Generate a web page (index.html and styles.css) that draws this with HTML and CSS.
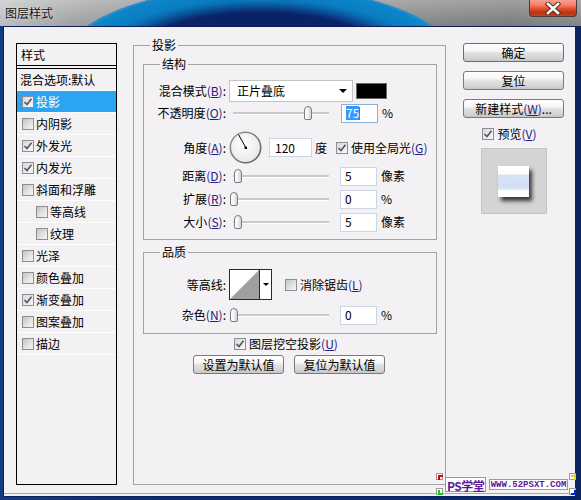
FILE: index.html
```html
<!DOCTYPE html>
<html lang="zh-CN">
<head>
<meta charset="utf-8">
<title>图层样式</title>
<link rel="stylesheet" href="styles.css">
</head>
<body>
<div class="win">
  <div class="titlebar">
    <span class="title">图层样式</span>
    <div class="close">
      <svg width="20" height="13" viewBox="0 0 20 13"><path d="M5 2 L15 11 M15 2 L5 11" stroke="#5a2a20" stroke-width="4.5" stroke-linecap="square"/><path d="M5 2 L15 11 M15 2 L5 11" stroke="#fff" stroke-width="2.6" stroke-linecap="square"/></svg>
    </div>
  </div>
  <div class="frame">
    <div class="content">
      <div class="stylelist">
        <div class="list-head">样式</div>
        <div class="li blend">混合选项:默认</div>
        <div class="li sel"><span class="cb on"><svg width="10" height="10" viewBox="0 0 10 10"><path d="M1.5 5 L4 7.5 L8.5 1.8" fill="none" stroke="#4c5866" stroke-width="1.6"/></svg></span>投影</div>
        <div class="li"><span class="cb"></span>内阴影</div>
        <div class="li"><span class="cb on"><svg width="10" height="10" viewBox="0 0 10 10"><path d="M1.5 5 L4 7.5 L8.5 1.8" fill="none" stroke="#4c5866" stroke-width="1.6"/></svg></span>外发光</div>
        <div class="li"><span class="cb on"><svg width="10" height="10" viewBox="0 0 10 10"><path d="M1.5 5 L4 7.5 L8.5 1.8" fill="none" stroke="#4c5866" stroke-width="1.6"/></svg></span>内发光</div>
        <div class="li"><span class="cb"></span>斜面和浮雕</div>
        <div class="li sub"><span class="cb"></span>等高线</div>
        <div class="li sub"><span class="cb"></span>纹理</div>
        <div class="li"><span class="cb"></span>光泽</div>
        <div class="li"><span class="cb"></span>颜色叠加</div>
        <div class="li"><span class="cb on"><svg width="10" height="10" viewBox="0 0 10 10"><path d="M1.5 5 L4 7.5 L8.5 1.8" fill="none" stroke="#4c5866" stroke-width="1.6"/></svg></span>渐变叠加</div>
        <div class="li"><span class="cb"></span>图案叠加</div>
        <div class="li"><span class="cb"></span>描边</div>
      </div>

      <div class="grp grp-outer">
        <span class="legend">投影</span>
        <div class="grp grp-struct">
          <span class="legend">结构</span>
          <div class="row r-blend">
            <span class="lbl">混合模式<span class="mn">(<u>B</u>)</span>:</span>
            <div class="dd">正片叠底<span class="dd-arrow"></span></div>
            <div class="swatch"></div>
          </div>
          <div class="row r-op">
            <span class="lbl">不透明度<span class="mn">(<u>O</u>)</span>:</span>
            <div class="slider"><span class="thumb" style="left:75px"></span></div>
            <div class="inp focus"><span class="selected">75</span><span class="caret"></span></div>
            <span class="unit">%</span>
          </div>
          <div class="row r-angle">
            <span class="lbl">角度<span class="mn">(<u>A</u>)</span>:</span>
            <svg class="dial" width="33" height="33" viewBox="0 0 33 33">
              <defs>
                <radialGradient id="dg" cx="45%" cy="40%" r="65%"><stop offset="0" stop-color="#ffffff"/><stop offset="1" stop-color="#e6e6e6"/></radialGradient>
                <linearGradient id="rg" x1="0" y1="0" x2="1" y2="1"><stop offset="0" stop-color="#9a9a9a"/><stop offset="1" stop-color="#5e5e5e"/></linearGradient>
              </defs>
              <circle cx="16.5" cy="16.5" r="15.2" fill="url(#dg)" stroke="url(#rg)" stroke-width="1.6"/>
              <line x1="17" y1="17" x2="9.5" y2="3.5" stroke="#000" stroke-width="1"/>
              <rect x="15.6" y="15.6" width="2.4" height="2.4" fill="#000"/>
            </svg>
            <div class="inp wide">120</div>
            <span class="unit u-deg">度</span>
            <span class="cb on gl"><svg width="10" height="10" viewBox="0 0 10 10"><path d="M1.5 5 L4 7.5 L8.5 1.8" fill="none" stroke="#4c5866" stroke-width="1.6"/></svg></span>
            <span class="cbt">使用全局光<span class="mn">(<u>G</u>)</span></span>
          </div>
          <div class="row r-dist">
            <span class="lbl">距离<span class="mn">(<u>D</u>)</span>:</span>
            <div class="slider"><span class="thumb" style="left:5px"></span></div>
            <div class="inp">5</div>
            <span class="unit">像素</span>
          </div>
          <div class="row r-sp">
            <span class="lbl">扩展<span class="mn">(<u>R</u>)</span>:</span>
            <div class="slider"><span class="thumb" style="left:1px"></span></div>
            <div class="inp">0</div>
            <span class="unit">%</span>
          </div>
          <div class="row r-sz">
            <span class="lbl">大小<span class="mn">(<u>S</u>)</span>:</span>
            <div class="slider"><span class="thumb" style="left:5px"></span></div>
            <div class="inp">5</div>
            <span class="unit">像素</span>
          </div>
        </div>

        <div class="grp grp-qual">
          <span class="legend">品质</span>
          <div class="row r-contour">
            <span class="lbl">等高线:</span>
            <div class="contour">
              <svg class="ct-img" width="29" height="29" viewBox="0 0 29 29"><polygon points="0,29 29,0 29,29" fill="#a19fa1"/></svg>
              <div class="ct-arrow"><span class="dd-arrow small"></span></div>
            </div>
            <span class="cb aa"></span>
            <span class="cbt">消除锯齿<span class="mn">(<u>L</u>)</span></span>
          </div>
          <div class="row r-noise">
            <span class="lbl">杂色<span class="mn">(<u>N</u>)</span>:</span>
            <div class="slider"><span class="thumb" style="left:1px"></span></div>
            <div class="inp">0</div>
            <span class="unit">%</span>
          </div>
        </div>

        <div class="knock">
          <span class="cb on"><svg width="10" height="10" viewBox="0 0 10 10"><path d="M1.5 5 L4 7.5 L8.5 1.8" fill="none" stroke="#4c5866" stroke-width="1.6"/></svg></span>
          <span class="cbt">图层挖空投影<span class="mn">(<u>U</u>)</span></span>
        </div>
        <div class="btnrow">
          <div class="btn">设置为默认值</div>
          <div class="btn">复位为默认值</div>
        </div>
      </div>

      <div class="side">
        <div class="btn ok">确定</div>
        <div class="btn">复位</div>
        <div class="btn">新建样式<span class="mn">(<u>W</u>)</span>...</div>
        <div class="prev-row">
          <span class="cb on"><svg width="10" height="10" viewBox="0 0 10 10"><path d="M1.5 5 L4 7.5 L8.5 1.8" fill="none" stroke="#4c5866" stroke-width="1.6"/></svg></span>
          <span class="cbt">预览<span class="mn">(<u>V</u>)</span></span>
        </div>
        <div class="preview"><div class="pv-sq"></div></div>
      </div>
    </div>
  </div>

  <div class="wm">
    <span class="mk mk-r"></span>
    <span class="mk mk-g"></span>
    <span class="mk mk-y"></span>
    <span class="mk mk-b"></span>
    <span class="wm-ps">PS学堂</span>
    <span class="wm-url">WWW.52PSXT.COM</span>
  </div>
</div>
</body>
</html>
```

FILE: styles.css
```css
* { box-sizing: border-box; margin: 0; padding: 0; }
html, body { width: 581px; height: 500px; overflow: hidden; }
body {
  font-family: "Noto Sans CJK SC", "Liberation Sans", sans-serif;
  font-size: 12px;
  line-height: 1;
  color: #000;
  background: #0c2a6c;
}
.win { position: relative; width: 581px; height: 500px; display: flex; flex-direction: column; }

/* title bar */
.titlebar {
  height: 26px; flex: none; display: flex; align-items: flex-start;
  background:
    radial-gradient(ellipse 200px 79px at 260px 65px,
      #0a2266 0%, #0a2266 66%, #0b3078 69%, #0b4288 72%, #0a5a9e 76%, #0a6eb4 80%, #0a7ec2 85%, #0c86c8 97%, #3a90c8 99.5%, rgba(0,0,0,0) 100%),
    linear-gradient(180deg, rgba(255,255,255,0.25), rgba(0,0,0,0.05)),
    linear-gradient(90deg, #c4c6c8 0%, #a8aaac 12%, #8e9092 30%, #8a8c8e 70%, #7e8082 88%, #8a8c8e 100%);
}
.title { padding: 7px 0 0 5px; font-size: 12px; color: #101010; text-shadow: 0 0 2px rgba(255,255,255,0.8); }
.close {
  margin-left: auto; margin-right: 4px; width: 48px; height: 17px;
  border: 1px solid #4a3a38; border-top: none; border-radius: 0 0 4px 4px;
  background: linear-gradient(180deg, #f8a090 0%, #f47a64 35%, #e04e2c 55%, #b83410 80%, #c84418 100%);
  display: flex; align-items: center; justify-content: center;
}

/* frame */
.frame { flex: 1; padding: 0 5px 3px 3px; background: linear-gradient(90deg, #153a84, #0c2a6c 30%, #0c2a6c 70%, #0a2462); }
.content {
  height: 100%; border: 1px solid #0b1f58; background: #f3f1f3;
  display: flex; align-items: flex-start; padding: 16px 0 0 12px;
  box-shadow: inset 0 -2px 0 #f3f1f3, inset 0 -3px 0 #a8a8a8;
}

/* style list */
.stylelist { width: 101px; height: 442px; border: 1px solid #000; flex: none; background: #f3f1f3; }
.list-head { height: 25px; border-bottom: 4px double #000; padding: 4px 0 0 4px; line-height: 13px; }
.li { height: 22px; border-bottom: 1px solid #fdfdfd; display: flex; align-items: center; padding-left: 5px; white-space: nowrap; }
.li .cb { margin-right: 2px; }
.li.blend { padding-left: 3px; }
.li.sub { padding-left: 19px; }
.li.sel { background: #2aa4f3; color: #fff; border-bottom-color: #fdfdfd; }

/* checkbox */
.cb {
  width: 12px; height: 12px; flex: none; border: 1px solid #8c8e90;
  background: linear-gradient(135deg, #c2c4c6 0%, #dedfe0 50%, #f6f6f6 100%);
  display: inline-flex; align-items: center; justify-content: center;
}
.cb.on { background: linear-gradient(135deg, #d6d8da 0%, #ececec 60%, #f8f8f8 100%); }
.cbt { margin-left: 3px; white-space: nowrap; }
.mn { color: #23207e; }
.mn u { text-decoration: underline; text-underline-offset: 1px; }

/* groups */
.grp { border: 1px solid #a2a2a2; position: relative; }
.legend { position: absolute; top: -7px; left: 16px; padding: 0 2px; background: #f3f1f3; line-height: 12px; }
.grp-outer { width: 313px; height: 440px; margin: 2px 0 0 16px; padding: 18px 8px 0 9px; flex: none; }
.grp-struct { height: 176px; padding-top: 15px; }
.grp-qual { height: 82px; margin-top: 12px; padding-top: 16px; }

.row { display: flex; align-items: center; }
.lbl { width: 82px; flex: none; text-align: right; white-space: nowrap; }
.r-blend { height: 22px; }
.r-op { height: 20px; margin-top: 1px; }
.r-angle { height: 33px; margin-top: 8px; }
.r-dist { height: 20px; margin-top: 2px; }
.r-sp, .r-sz { height: 20px; margin-top: 3px; }
.r-contour { height: 31px; }
.r-noise { height: 20px; margin-top: 5px; }

.dd {
  width: 124px; height: 22px; margin-left: 3px; border: 1px solid #c4c4c4; background: #fff;
  display: flex; align-items: center; padding-left: 7px;
}
.dd-arrow { width: 0; height: 0; margin-left: auto; margin-right: 5px; border-left: 4px solid transparent; border-right: 4px solid transparent; border-top: 4px solid #000; }
.dd-arrow.small { margin: 0; border-left-width: 3px; border-right-width: 3px; border-top-width: 3px; }
.swatch { width: 31px; height: 16px; margin-left: 3px; background: #000; border: 1px solid #6a6a6a; }

.slider { position: relative; width: 104px; height: 14px; margin-left: 3px; flex: none; }
.slider::before {
  content: ""; position: absolute; left: 4px; right: 4px; top: 6px; height: 2px;
  background: #c9c9c9; border-bottom: 1px solid #fff;
}
.thumb {
  position: absolute; top: 0; width: 8px; height: 14px;
  border: 1px solid #7c7c7c; border-radius: 4px 4px 2px 2px;
  background: linear-gradient(90deg, #ffffff 0%, #f2f2f2 50%, #d0d0d0 100%);
}

.inp {
  width: 37px; height: 19px; margin-left: 7px; flex: none; border: 1px solid #cbd6e2; background: #fff;
  display: flex; align-items: center; padding-left: 4px; white-space: nowrap;
}
.inp.focus { border-color: #8fb0d6; margin-left: 8px; }
.inp.wide { width: 43px; margin-left: 7px; padding-left: 5px; }
.selected { background: #3399ff; color: #fff; padding: 1px 0; }
.caret { width: 1px; height: 13px; background: #c06000; }
.unit { margin-left: 4px; }
.u-deg { margin-left: 3px; }
.gl { margin-left: 9px; }
.dial { margin-left: 3px; flex: none; }

.contour {
  width: 43px; height: 31px; margin-left: 3px; border: 1px solid #2a2a2a; background: #fff;
  display: flex; flex: none;
}
.ct-img { display: block; }
.ct-arrow { flex: 1; border-left: 1px solid #2a2a2a; display: flex; align-items: center; justify-content: center; }
.aa { margin-left: 13px; }

.knock { display: flex; align-items: center; justify-content: center; height: 17px; margin-top: 1px; padding-right: 8px; }
.btnrow { display: flex; justify-content: center; gap: 10px; margin-top: 3px; padding-right: 2px; }

/* buttons */
.btn {
  width: 91px; height: 19px; border: 1px solid #7a7a7a; border-radius: 3px;
  background: linear-gradient(180deg, #ffffff 0%, #f6f6f6 40%, #e2e2e2 52%, #d6d6d6 80%, #c6c6c6 100%);
  display: flex; align-items: center; justify-content: center; white-space: nowrap;
}
.side { width: 101px; margin-left: 17px; flex: none; display: flex; flex-direction: column; align-items: center; }
.side .btn { width: 101px; margin-bottom: 9px; }
.side .btn.ok { border-color: #3a78c4; }
.prev-row { display: flex; align-items: center; height: 12px; margin-top: 1px; padding-right: 8px; }
.preview {
  width: 66px; height: 66px; margin-top: 8px; border: 1px solid #c4c4c4;
  background: #d4d4d4; display: flex; padding: 17px 0 0 16px;
}
.pv-sq {
  width: 31px; height: 31px;
  background: linear-gradient(180deg, #ffffff 0%, #fcfcfc 26%, #d8e2f4 30%, #d2def6 68%, #e4eaf6 76%, #ffffff 80%);
  box-shadow: 3px 4px 4px #3a3a3a;
}

/* watermark */
.wm { position: absolute; left: 436px; top: 473px; width: 140px; height: 22px; }
.mk { position: absolute; width: 7px; height: 7px; background: #ffffff; border: 1px solid #9a9a9a; }
.mk::after { content: ""; position: absolute; width: 3px; height: 3px; }
.mk-r { left: 0; top: 0; }
.mk-r::after { left: 1px; top: 1px; border-left: 2px solid #e00000; border-top: 2px solid #e00000; }
.mk-g { left: 0; top: 15px; }
.mk-g::after { left: 1px; top: 1px; border-left: 2px solid #10d010; border-bottom: 2px solid #10d010; }
.mk-y { left: 133px; top: 0; }
.mk-y::after { left: 1px; top: 1px; border-right: 2px solid #e8d800; border-top: 2px solid #e8d800; }
.mk-b { left: 133px; top: 15px; }
.mk-b::after { left: 1px; top: 1px; border-right: 2px solid #1020d0; border-bottom: 2px solid #1020d0; }
.wm-ps {
  position: absolute; left: 9px; top: 4px; height: 15px; padding: 0 1px;
  font-size: 12px; line-height: 15px; font-weight: bold; color: #5a1896;
  background: #fff; border: 1px solid #9a9a9a; letter-spacing: -0.5px;
}
.wm-url {
  position: absolute; left: 53px; top: 6px; height: 11px; width: 79px;
  font-family: "Liberation Mono", monospace; font-size: 9px; line-height: 10px; font-weight: bold;
  color: #5a1896; background: #fff; border: 1px solid #9a9a9a; text-align: center; letter-spacing: 0;
}
```
